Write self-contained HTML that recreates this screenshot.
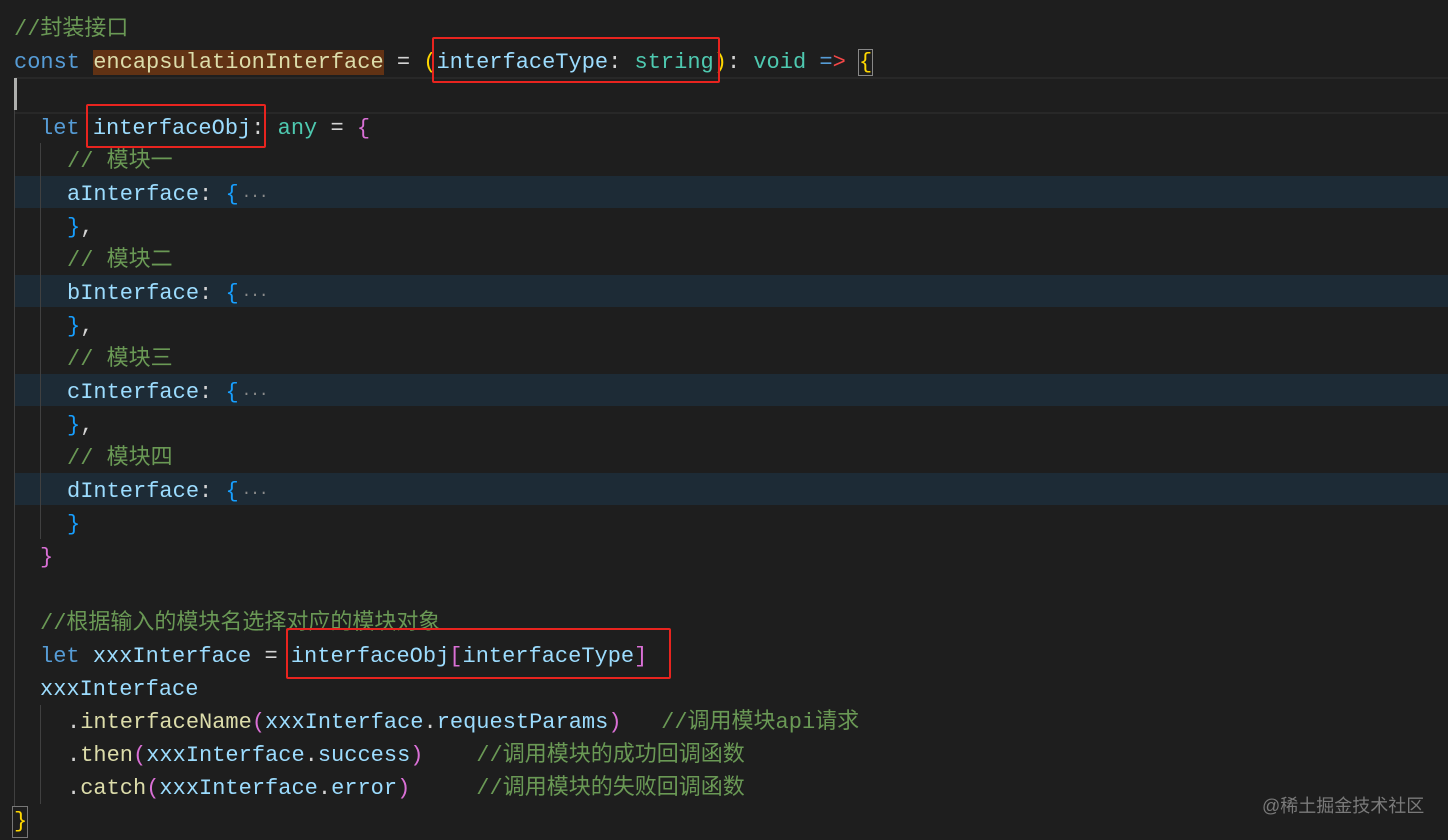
<!DOCTYPE html>
<html><head><meta charset="utf-8"><style>
html,body{margin:0;padding:0;background:#1e1e1e;width:1448px;height:840px;overflow:hidden}
.l{position:absolute;left:0;height:33px;line-height:33px;font-family:"Liberation Mono","Noto Sans CJK SC",monospace;font-size:22px;white-space:pre;color:#d4d4d4;margin-top:3px}
.c{color:#6a9955}.k{color:#569cd6}.v{color:#9cdcfe}.t{color:#4ec9b0}.f{color:#dcdcaa}
.y{color:#ffd700}.p{color:#da70d6}.b{color:#179fff}.r{color:#f44747}.g{color:#8b8b8b;font-size:16px;letter-spacing:-1px;margin-left:3px}
.hl{position:absolute;left:15px;right:0;height:32px;background:#1d2b36}
.box{position:absolute;border:2px solid #e8241f;border-radius:2px}
.ig{position:absolute;width:1px;background:#404040}
</style></head><body>
<div style="position:absolute;left:15px;right:0;top:77px;height:33px;border-top:2px solid #282828;border-bottom:2px solid #282828"></div>
<div style="position:absolute;left:14px;top:78px;width:3px;height:32px;background:#aeafad"></div>
<div class="hl" style="top:176px"></div>
<div class="hl" style="top:275px"></div>
<div class="hl" style="top:374px"></div>
<div class="hl" style="top:473px"></div>
<div class="ig" style="left:14px;top:110px;height:697px"></div>
<div class="ig" style="left:40px;top:143px;height:396px"></div>
<div class="ig" style="left:40px;top:705px;height:99px"></div>
<div style="position:absolute;left:12px;top:806px;width:14px;height:30px;border:1px solid #777"></div>

<div class="l" style="top:10px;left:14px"><span class="c">//封装接口</span></div>
<div class="l" style="top:43px;left:14px"><span class="k">const</span> <span class="f" style="background:#613214">encapsulationInterface</span> = <span class="y">(</span><span class="v">interfaceType</span>: <span class="t">string</span><span class="y">)</span>: <span class="t">void</span> <span class="k">=</span><span class="r">&gt;</span> <span class="y" style="outline:1px solid #888">{</span></div>
<div class="l" style="top:109px;left:40px"><span class="k">let</span> <span class="v">interfaceObj</span>: <span class="t">any</span> = <span class="p">{</span></div>
<div class="l" style="top:142px;left:67px"><span class="c">// 模块一</span></div>
<div class="l" style="top:175px;left:67px"><span class="v">aInterface</span>: <span class="b">{</span><span class="g">···</span></div>
<div class="l" style="top:208px;left:67px"><span class="b">}</span>,</div>
<div class="l" style="top:241px;left:67px"><span class="c">// 模块二</span></div>
<div class="l" style="top:274px;left:67px"><span class="v">bInterface</span>: <span class="b">{</span><span class="g">···</span></div>
<div class="l" style="top:307px;left:67px"><span class="b">}</span>,</div>
<div class="l" style="top:340px;left:67px"><span class="c">// 模块三</span></div>
<div class="l" style="top:373px;left:67px"><span class="v">cInterface</span>: <span class="b">{</span><span class="g">···</span></div>
<div class="l" style="top:406px;left:67px"><span class="b">}</span>,</div>
<div class="l" style="top:439px;left:67px"><span class="c">// 模块四</span></div>
<div class="l" style="top:472px;left:67px"><span class="v">dInterface</span>: <span class="b">{</span><span class="g">···</span></div>
<div class="l" style="top:505px;left:67px"><span class="b">}</span></div>
<div class="l" style="top:538px;left:40px"><span class="p">}</span></div>
<div class="l" style="top:604px;left:40px"><span class="c">//根据输入的模块名选择对应的模块对象</span></div>
<div class="l" style="top:637px;left:40px"><span class="k">let</span> <span class="v">xxxInterface</span> = <span class="v">interfaceObj</span><span class="p">[</span><span class="v">interfaceType</span><span class="p">]</span></div>
<div class="l" style="top:670px;left:40px"><span class="v">xxxInterface</span></div>
<div class="l" style="top:703px;left:67px">.<span class="f">interfaceName</span><span class="p">(</span><span class="v">xxxInterface</span>.<span class="v">requestParams</span><span class="p">)</span>   <span class="c">//调用模块api请求</span></div>
<div class="l" style="top:736px;left:67px">.<span class="f">then</span><span class="p">(</span><span class="v">xxxInterface</span>.<span class="v">success</span><span class="p">)</span>    <span class="c">//调用模块的成功回调函数</span></div>
<div class="l" style="top:769px;left:67px">.<span class="f">catch</span><span class="p">(</span><span class="v">xxxInterface</span>.<span class="v">error</span><span class="p">)</span>     <span class="c">//调用模块的失败回调函数</span></div>
<div class="l" style="top:802px;left:14px"><span class="y">}</span></div>

<div class="box" style="left:432px;top:37px;width:284px;height:42px"></div>
<div class="box" style="left:86px;top:104px;width:176px;height:40px"></div>
<div class="box" style="left:286px;top:628px;width:381px;height:47px"></div>
<div style="position:absolute;left:1262px;top:792px;font-family:'Liberation Sans','Noto Sans CJK SC',sans-serif;font-size:18px;color:#7a7a7a">@稀土掘金技术社区</div>
</body></html>
